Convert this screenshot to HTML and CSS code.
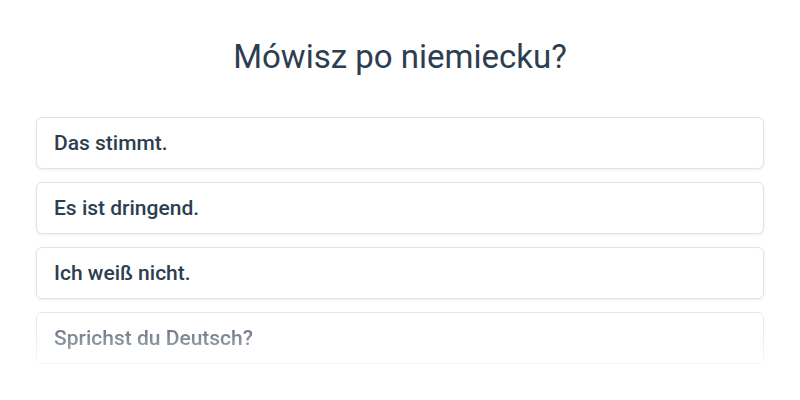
FILE: index.html
```html
<!DOCTYPE html>
<html lang="de">
<head>
    <meta charset="UTF-8">
    <meta name="viewport" content="width=device-width, initial-scale=1.0">
    <title>Mówisz po niemiecku?</title>
    <link rel="stylesheet" href="styles.css">
</head>
<body>
    <div class="quiz">
        <h1 class="question">Mówisz po niemiecku?</h1>

        <div class="answers">
            <button class="answer">Das stimmt.</button>
            <button class="answer">Es ist dringend.</button>
            <button class="answer">Ich weiß nicht.</button>
            <button class="answer faded">Sprichst du Deutsch?</button>
        </div>
    </div>
</body>
</html>
```

FILE: styles.css
```css
body {
    margin: 0;
    background: #ffffff;
    font-family: Roboto, "Liberation Sans", Arial, sans-serif;
    color: #2c3e50;
}
.quiz {
    padding: 36px 36px 0;
}
.question {
    margin: 0 0 39px;
    font-size: 33px;
    font-weight: 400;
    line-height: 42px;
    text-align: center;
    color: #2c3e50;
}
.answers {
    display: flex;
    flex-direction: column;
    gap: 13px;
}
.answer {
    display: block;
    width: 100%;
    height: 52px;
    padding: 0 17px;
    background: #ffffff;
    border: 1px solid #e3e3e3;
    border-radius: 6px;
    box-shadow: 0 1px 3px rgba(0,0,0,0.08);
    font-family: inherit;
    font-size: 21px;
    font-weight: 500;
    color: #2c3e50;
    text-align: left;
}
.faded {
    -webkit-mask-image: linear-gradient(to bottom, rgba(0,0,0,0.9) 0%, rgba(0,0,0,0.3) 100%);
    mask-image: linear-gradient(to bottom, rgba(0,0,0,0.9) 0%, rgba(0,0,0,0.3) 100%);
}
```
